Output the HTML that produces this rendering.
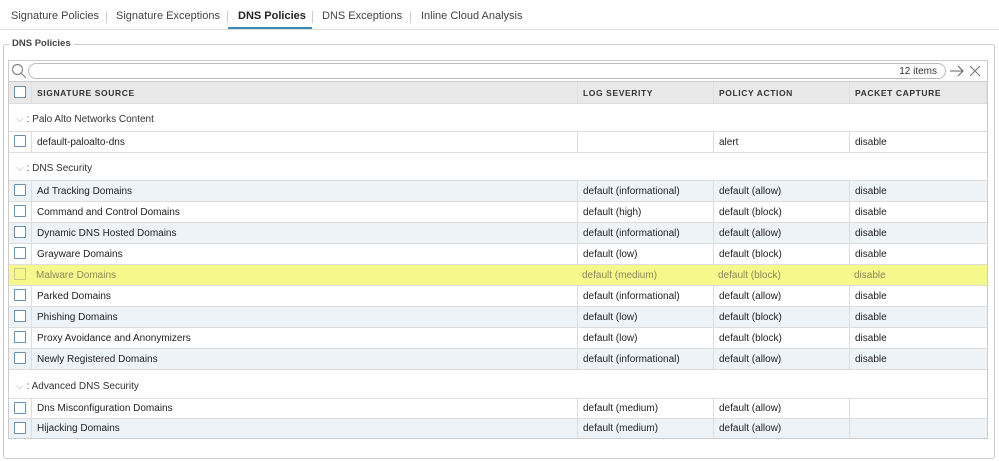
<!DOCTYPE html>
<html><head><style>
*{margin:0;padding:0;box-sizing:border-box}
body{width:999px;height:461px;background:#fff;font-family:"Liberation Sans",sans-serif;font-size:10px;color:#222;position:relative;overflow:hidden}
.tabs{position:absolute;top:0;left:0;width:999px;height:30px;border-bottom:1px solid #ddd}
.tab{position:absolute;top:10px;font-size:11px;color:#444}
.sep{position:absolute;top:11px;width:1px;height:12px;background:#ccc}
.fs{position:absolute;left:3px;top:44px;width:992px;height:415px;border:1px solid #ccc;border-radius:3px}
.legend{position:absolute;left:9px;top:38px;background:#fff;padding:0 3px;font-size:9.5px;font-weight:bold;color:#444}
.tbl{position:absolute;left:8px;top:60px;width:980px;height:379px;border:1px solid #ccc}
.row{position:absolute;left:0;width:978px;border-bottom:1px solid #ddd}
.c{position:absolute;top:0;height:100%;border-left:1px solid #ddd;padding-left:5px;display:flex;align-items:center;white-space:nowrap}
.cb{position:absolute;left:5px;width:12px;height:12px;border:1.5px solid #6b8fb0;border-radius:1px;background:#fff}
.hdr{background:#e9e9e9;font-size:8.5px;font-weight:bold;letter-spacing:.6px;color:#333}
.grp{color:#333;font-size:10px}
.grp .c{padding-top:4px}
.b{background:#eef3f8}
.y{background:#f6f88c;color:#8a8a5a}
.y .cb{border-color:#c8c98a;background:#f6f88c}
</style></head><body>
<div class="tabs">
<span class="tab" style="left:11px">Signature Policies</span>
<div class="sep" style="left:106px"></div>
<span class="tab" style="left:116px">Signature Exceptions</span>
<div class="sep" style="left:227px"></div>
<span class="tab" style="left:238px;font-weight:bold;color:#222">DNS Policies</span>
<div style="position:absolute;left:228px;top:27px;width:84px;height:2px;background:#3a8ab8"></div>
<div class="sep" style="left:312px"></div>
<span class="tab" style="left:322px">DNS Exceptions</span>
<div class="sep" style="left:410px"></div>
<span class="tab" style="left:421px">Inline Cloud Analysis</span>
</div>
<div class="fs"></div>
<div class="legend">DNS Policies</div>
<div class="tbl">
<div class="row" style="top:0;height:21px;border-bottom:1px solid #ccc">
<svg style="position:absolute;left:2px;top:2px" width="16" height="16" viewBox="0 0 16 16"><circle cx="6.5" cy="6.5" r="5" fill="none" stroke="#888" stroke-width="1.2"/><path d="M10 10l5 5" stroke="#888" stroke-width="1.2"/></svg>
<div style="position:absolute;left:19px;top:2px;width:918px;height:16px;border:1px solid #bbb;border-radius:8px"><span style="position:absolute;right:8px;top:2px;font-size:10px;color:#333">12 items</span></div>
<svg style="position:absolute;left:940px;top:3px" width="36" height="14" viewBox="0 0 36 14"><path d="M1 7h13M9 2l5 5-5 5" fill="none" stroke="#666" stroke-width="1.1"/><path d="M21 2l10 10M31 2l-10 10" stroke="#777" stroke-width="1.1"/></svg>
</div>
<div class="row hdr" style="top:21px;height:22px">
<div class="cb" style="top:4px"></div>
<div class="c" style="left:22px">SIGNATURE SOURCE</div>
<div class="c" style="left:568px">LOG SEVERITY</div>
<div class="c" style="left:704px">POLICY ACTION</div>
<div class="c" style="left:840px;width:138px;border-right:1px solid #ddd">PACKET CAPTURE</div>
</div>
<div class="row grp" style="top:43px;height:28px"><div class="c" style="left:0;border:0;padding-left:7px"><span style="color:#aaa;margin-right:3px">⌵</span>: Palo Alto Networks Content</div></div>
<div class="row" style="top:71px;height:21px"><div class="cb" style="top:3px"></div><div class="c" style="left:22px">default-paloalto-dns</div><div class="c" style="left:568px"></div><div class="c" style="left:704px">alert</div><div class="c" style="left:840px">disable</div></div>
<div class="row grp" style="top:92px;height:28px"><div class="c" style="left:0;border:0;padding-left:7px"><span style="color:#aaa;margin-right:3px">⌵</span>: DNS Security</div></div>
<div class="row b" style="top:120px;height:21px"><div class="cb" style="top:3px"></div><div class="c" style="left:22px">Ad Tracking Domains</div><div class="c" style="left:568px">default (informational)</div><div class="c" style="left:704px">default (allow)</div><div class="c" style="left:840px">disable</div></div>
<div class="row" style="top:141px;height:21px"><div class="cb" style="top:3px"></div><div class="c" style="left:22px">Command and Control Domains</div><div class="c" style="left:568px">default (high)</div><div class="c" style="left:704px">default (block)</div><div class="c" style="left:840px">disable</div></div>
<div class="row b" style="top:162px;height:21px"><div class="cb" style="top:3px"></div><div class="c" style="left:22px">Dynamic DNS Hosted Domains</div><div class="c" style="left:568px">default (informational)</div><div class="c" style="left:704px">default (allow)</div><div class="c" style="left:840px">disable</div></div>
<div class="row" style="top:183px;height:21px"><div class="cb" style="top:3px"></div><div class="c" style="left:22px">Grayware Domains</div><div class="c" style="left:568px">default (low)</div><div class="c" style="left:704px">default (block)</div><div class="c" style="left:840px">disable</div></div>
<div class="row y" style="top:204px;height:21px"><div class="cb" style="top:3px"></div><div class="c" style="left:22px;border:0">Malware Domains</div><div class="c" style="left:568px;border:0">default (medium)</div><div class="c" style="left:704px;border:0">default (block)</div><div class="c" style="left:840px;border:0">disable</div></div>
<div class="row" style="top:225px;height:21px"><div class="cb" style="top:3px"></div><div class="c" style="left:22px">Parked Domains</div><div class="c" style="left:568px">default (informational)</div><div class="c" style="left:704px">default (allow)</div><div class="c" style="left:840px">disable</div></div>
<div class="row b" style="top:246px;height:21px"><div class="cb" style="top:3px"></div><div class="c" style="left:22px">Phishing Domains</div><div class="c" style="left:568px">default (low)</div><div class="c" style="left:704px">default (block)</div><div class="c" style="left:840px">disable</div></div>
<div class="row" style="top:267px;height:21px"><div class="cb" style="top:3px"></div><div class="c" style="left:22px">Proxy Avoidance and Anonymizers</div><div class="c" style="left:568px">default (low)</div><div class="c" style="left:704px">default (block)</div><div class="c" style="left:840px">disable</div></div>
<div class="row b" style="top:288px;height:21px"><div class="cb" style="top:3px"></div><div class="c" style="left:22px">Newly Registered Domains</div><div class="c" style="left:568px">default (informational)</div><div class="c" style="left:704px">default (allow)</div><div class="c" style="left:840px">disable</div></div>
<div class="row grp" style="top:309px;height:29px"><div class="c" style="left:0;border:0;padding-left:7px"><span style="color:#aaa;margin-right:3px">⌵</span>: Advanced DNS Security</div></div>
<div class="row" style="top:338px;height:20px"><div class="cb" style="top:3px"></div><div class="c" style="left:22px">Dns Misconfiguration Domains</div><div class="c" style="left:568px">default (medium)</div><div class="c" style="left:704px">default (allow)</div><div class="c" style="left:840px"></div></div>
<div class="row b" style="top:358px;height:19px;border-bottom:0"><div class="cb" style="top:3px"></div><div class="c" style="left:22px">Hijacking Domains</div><div class="c" style="left:568px">default (medium)</div><div class="c" style="left:704px">default (allow)</div><div class="c" style="left:840px"></div></div>
</div>
</body></html>
